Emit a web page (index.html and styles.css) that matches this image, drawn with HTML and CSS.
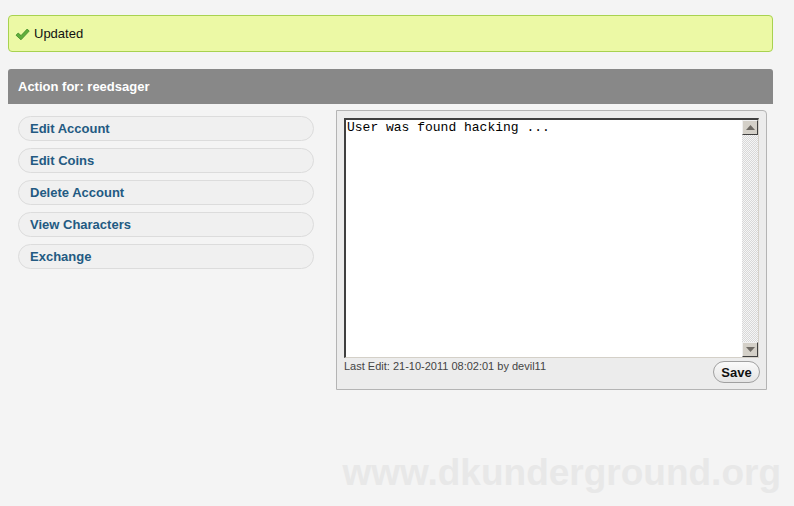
FILE: index.html
```html
<!DOCTYPE html>
<html>
<head>
<meta charset="utf-8">
<link rel="stylesheet" href="styles.css">
</head>
<body>
<div class="page">
  <div class="alert">
    <svg class="check" width="15" height="13" viewBox="0 0 15 13"><path d="M1 7.2 L3.2 5 L6 7.6 L12.2 1 L14.2 3.1 L6 11.8 Z" fill="#5fae3c" stroke="#3e8a26" stroke-width="0.8" stroke-linejoin="round"/></svg>
    <span>Updated</span>
  </div>
  <div class="header">Action for: reedsager</div>
  <div class="content">
    <div class="menu">
      <a class="mbtn">Edit Account</a>
      <a class="mbtn">Edit Coins</a>
      <a class="mbtn">Delete Account</a>
      <a class="mbtn">View Characters</a>
      <a class="mbtn">Exchange</a>
    </div>
    <div class="panel">
      <div class="tframe">
        <textarea class="note">User was found hacking ...</textarea>
        <div class="sbar">
          <div class="sarrow"><svg width="9" height="5" viewBox="0 0 9 5"><path d="M0 5 L4.5 0 L9 5 Z" fill="#6e6a64"/></svg></div>
          <div class="strack"></div>
          <div class="sarrow"><svg width="9" height="5" viewBox="0 0 9 5"><path d="M0 0 L4.5 5 L9 0 Z" fill="#6e6a64"/></svg></div>
        </div>
      </div>
      <div class="pfoot">
        <span class="lastedit">Last Edit: 21-10-2011 08:02:01 by devil11</span>
        <button class="save">Save</button>
      </div>
    </div>
  </div>
</div>
<div class="watermark">www.dkunderground.org</div>
</body>
</html>
```

FILE: styles.css
```css
html, body {
  margin: 0;
  padding: 0;
  background: #f4f4f4;
  font-family: "Liberation Sans", Arial, sans-serif;
  height: 506px;
  overflow: hidden;
  position: relative;
}
.page {
  width: 765px;
  margin-left: 8px;
  padding-top: 15px;
}
.alert {
  height: 35px;
  border: 1px solid #a8d250;
  border-radius: 4px;
  background: #ecf9a5;
  display: flex;
  align-items: center;
  padding-left: 6px;
  font-size: 13px;
  color: #111;
}
.check { margin-right: 4px; margin-top: 1px; }
.header {
  margin-top: 17px;
  height: 35px;
  background: #888888;
  border-radius: 3px 3px 0 0;
  color: #fff;
  font-weight: bold;
  font-size: 13px;
  display: flex;
  align-items: center;
  padding-left: 10px;
}
.content {
  display: flex;
  padding-top: 6px;
}
.menu {
  display: flex;
  flex-direction: column;
  gap: 7px;
  padding-left: 10px;
  padding-top: 6px;
  width: 296px;
}
.mbtn {
  display: flex;
  align-items: center;
  height: 23px;
  border: 1px solid #dcdcdc;
  border-radius: 13px;
  background: #f0f0f0;
  padding-left: 11px;
  font-size: 13px;
  font-weight: bold;
  color: #235a82;
}
.panel {
  margin-left: 22px;
  width: 415px;
  border: 1px solid #b4b4b4;
  border-radius: 0 4px 0 0;
  background: #ececec;
  padding: 7px 7px 6px 7px;
}
.tframe {
  display: flex;
  height: 237px;
  border-top: 2px solid #404040;
  border-left: 2px solid #404040;
  border-right: 1px solid #d4d0c8;
  border-bottom: 1px solid #d4d0c8;
  background: #fff;
}
.note {
  flex: 1;
  border: none;
  resize: none;
  outline: none;
  margin: 0;
  padding: 0 0 0 1px;
  font-family: "Liberation Mono", "Courier New", monospace;
  font-size: 13px;
  color: #000;
  background: #fff;
  overflow: hidden;
}
.sbar {
  width: 16px;
  display: flex;
  flex-direction: column;
  background-color: #f4f4f4;
  background-image: repeating-conic-gradient(#d8d8d8 0 25%, #f6f6f6 0 50%);
  background-size: 2px 2px;
}
.sarrow {
  height: 13px;
  background: #d4d0c8;
  border-top: 1px solid #f0f0f0;
  border-left: 1px solid #f0f0f0;
  border-right: 1px solid #404040;
  border-bottom: 1px solid #404040;
  display: flex;
  align-items: center;
  justify-content: center;
}
.strack { flex: 1; }
.pfoot {
  display: flex;
  justify-content: space-between;
  align-items: flex-start;
  padding-top: 2px;
}
.lastedit {
  font-size: 11px;
  color: #444;
}
.save {
  margin-top: 1px;
  height: 22px;
  width: 47px;
  margin-right: -1px;
  border: 1px solid #a0a0a0;
  border-radius: 11px;
  background: linear-gradient(#fafafa, #e4e4e4);
  font-family: "Liberation Sans", Arial, sans-serif;
  font-weight: bold;
  font-size: 13px;
  color: #111;
  padding: 0;
}
.watermark {
  position: absolute;
  right: 13px;
  top: 452px;
  font-size: 37px;
  font-weight: bold;
  color: #e8e8e8;
}
```
